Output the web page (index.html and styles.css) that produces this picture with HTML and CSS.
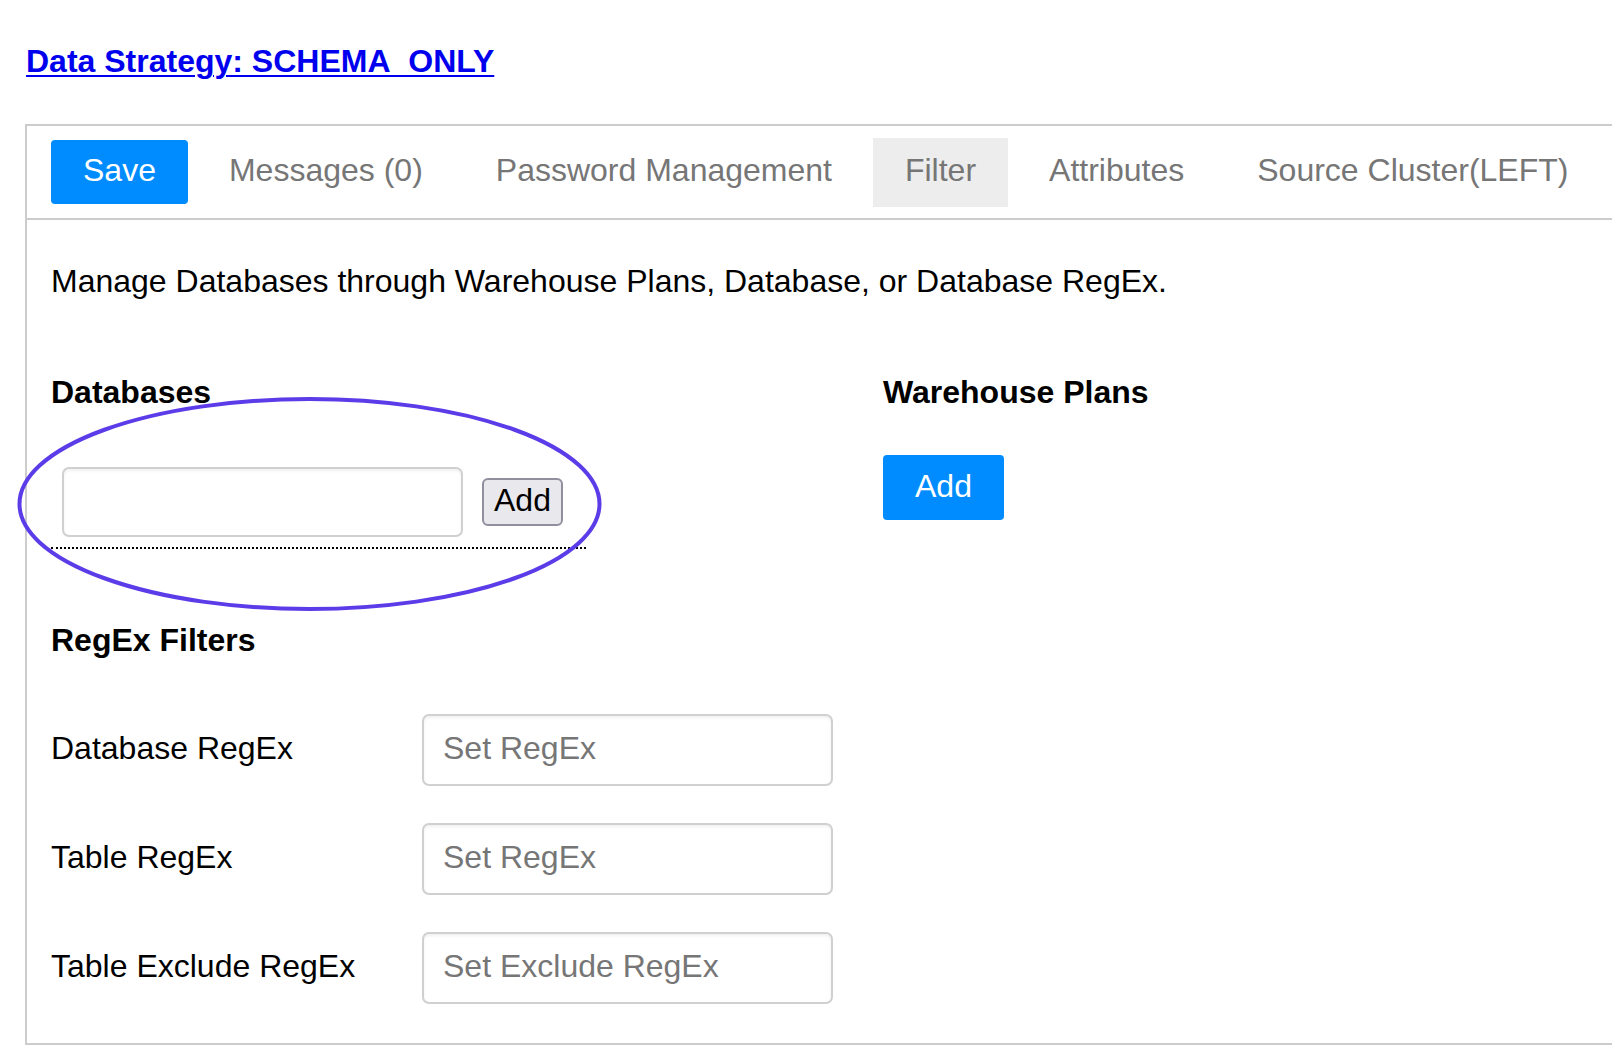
FILE: index.html
```html
<!DOCTYPE html>
<html lang="en">
<head>
<meta charset="utf-8">
<title>Data Strategy</title>
<link rel="stylesheet" href="styles.css">
</head>
<body>
<div class="page">
  <h3 class="title"><a href="#">Data Strategy: SCHEMA_ONLY</a></h3>
  <div class="panel">
    <div class="tabbar">
      <button class="btn-primary save">Save</button>
      <span class="tab">Messages (0)</span>
      <span class="tab">Password Management</span>
      <span class="tab active">Filter</span>
      <span class="tab">Attributes</span>
      <span class="tab">Source Cluster(LEFT)</span>
    </div>
    <div class="content">
      <p class="desc">Manage Databases through Warehouse Plans, Database, or Database RegEx.</p>
      <div class="cols">
        <div class="col-left">
          <h4 class="heading">Databases</h4>
          <div class="db-row">
            <input class="db-input" type="text">
            <button class="btn-native">Add</button>
          </div>
          <svg class="annot" width="585" height="216" viewBox="0 0 585 216" aria-hidden="true">
            <ellipse cx="292.5" cy="108" rx="290" ry="105" fill="none" stroke="#5b3ce8" stroke-width="4"/>
          </svg>
        </div>
        <div class="col-right">
          <h4 class="heading">Warehouse Plans</h4>
          <button class="btn-primary wh-add">Add</button>
        </div>
      </div>
      <h4 class="heading regex-heading">RegEx Filters</h4>
      <div class="regex-rows">
        <div class="regex-row">
          <label class="regex-label">Database RegEx</label>
          <input class="regex-input" type="text" placeholder="Set RegEx">
        </div>
        <div class="regex-row">
          <label class="regex-label">Table RegEx</label>
          <input class="regex-input" type="text" placeholder="Set RegEx">
        </div>
        <div class="regex-row">
          <label class="regex-label">Table Exclude RegEx</label>
          <input class="regex-input" type="text" placeholder="Set Exclude RegEx">
        </div>
      </div>
    </div>
  </div>
</div>
</body>
</html>
```

FILE: styles.css
```css
html, body {
  margin: 0;
  padding: 0;
  background: #fff;
  overflow: hidden;
}

body {
  font-family: "Liberation Sans", Arial, Helvetica, sans-serif;
  font-size: 32px;
  line-height: 36px;
  color: #000;
}

.page {
  padding-left: 25px;
}

.title {
  margin: 0;
  padding-top: 43px;
  padding-left: 1px;
  font-size: 32px;
  line-height: 36px;
  font-weight: bold;
}

.title a {
  color: #0000ee;
  text-decoration: underline;
  text-decoration-thickness: 2px;
  text-underline-offset: 3px;
}

.panel {
  margin-top: 45px;
  border: 2px solid #cccccc;
  border-right: none;
  padding-bottom: 39px;
}

.tabbar {
  display: flex;
  align-items: center;
  gap: 9px;
  height: 92px;
  padding-left: 24px;
  border-bottom: 2px solid #cccccc;
}

.btn-primary {
  font-family: inherit;
  font-size: 32px;
  line-height: 36px;
  color: #fff;
  background: #008cff;
  border: none;
  border-radius: 4px;
  padding: 0 32px;
  height: 64px;
}

.save {
  padding-bottom: 4px;
}

.tab {
  box-sizing: border-box;
  display: flex;
  align-items: center;
  height: 69px;
  padding: 0 32px 4px;
  color: #767676;
}

.tab.active {
  background: #ededed;
}

.content {
  padding-left: 24px;
}

.desc {
  margin: 43px 0 0;
}

.cols {
  display: grid;
  grid-template-columns: 832px 1fr;
  margin-top: 75px;
}

.col-left {
  position: relative;
  width: 535px;
}

.heading {
  margin: 0;
  font-size: 32px;
  line-height: 36px;
  font-weight: bold;
}

.db-row {
  display: flex;
  align-items: center;
  margin-top: 57px;
  padding: 0 0 10px 11px;
  border-bottom: 2px dotted #000;
}

.db-input {
  box-sizing: border-box;
  width: 401px;
  height: 70px;
  border: 2px solid #d0d0d0;
  border-radius: 7px;
  box-shadow: inset 0 2px 3px rgba(0, 0, 0, 0.06);
  font-family: inherit;
  font-size: 32px;
  padding: 0 18px;
  margin: 0;
}

.btn-native {
  box-sizing: border-box;
  margin-left: 19px;
  height: 48px;
  padding: 0 10px 4px;
  font-family: inherit;
  font-size: 32px;
  line-height: 36px;
  color: #000;
  background: #e9e9ed;
  border: 2px solid #8f8f9d;
  border-radius: 6px;
}

.annot {
  position: absolute;
  left: -34px;
  top: 22px;
  pointer-events: none;
}

.wh-add {
  margin-top: 45px;
  height: 65px;
  padding-bottom: 4px;
}

.regex-heading {
  margin-top: 73px;
}

.regex-rows {
  display: flex;
  flex-direction: column;
  gap: 37px;
  margin-top: 56px;
}

.regex-row {
  display: flex;
  align-items: center;
}

.regex-label {
  width: 371px;
  padding-bottom: 4px;
}

.regex-input {
  box-sizing: border-box;
  width: 411px;
  height: 72px;
  border: 2px solid #d0d0d0;
  border-radius: 7px;
  box-shadow: inset 0 2px 3px rgba(0, 0, 0, 0.06);
  font-family: inherit;
  font-size: 32px;
  padding: 0 19px 4px;
  margin: 0;
  color: #000;
}

.regex-input::placeholder {
  color: #767676;
  opacity: 1;
}
```
